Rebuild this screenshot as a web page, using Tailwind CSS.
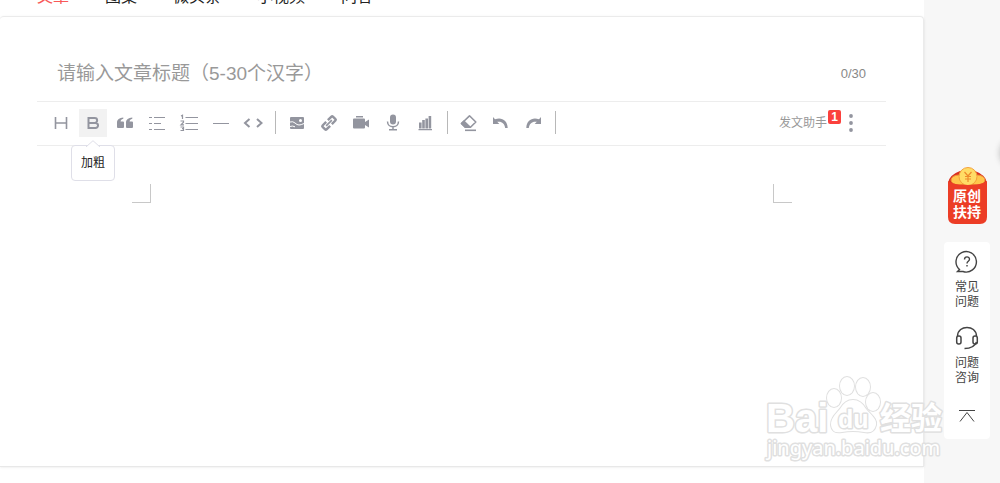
<!DOCTYPE html>
<html lang="zh-CN">
<head>
    <meta charset="UTF-8" />
    <meta name="viewport" content="width=device-width, initial-scale=1.0" />
    <title>发表文章</title>
    <script src="https://cdn.jsdelivr.net/npm/@tailwindcss/browser@4"></script>
</head>
<body class="relative flex min-h-screen overflow-hidden bg-[#f7f7f7] font-['Liberation_Sans','Noto_Sans_CJK_SC',sans-serif] text-[#222]">
    <div class="flex min-w-0 flex-1 flex-col bg-white">
        <!-- Content type tabs, scrolled under the top edge -->
        <nav class="flex h-4 items-end gap-9 overflow-hidden pb-[7px] pl-[37px] text-base leading-6">
            <a href="#" class="text-[#f85959]">文章</a>
            <a href="#">图集</a>
            <a href="#">微头条</a>
            <a href="#">小视频</a>
            <a href="#">问答</a>
        </nav>

        <!-- Editor -->
        <main class="flex-1 rounded-t border-t border-r border-[#ebebeb] pr-[37px] pl-[37px] shadow-sm">
            <div class="flex h-[84px] items-end justify-between px-5 pb-[11px]">
                <input type="text" aria-label="文章标题" placeholder="请输入文章标题（5-30个汉字）" class="h-8 min-w-0 flex-1 text-[19px] outline-none placeholder:text-[#999]" />
                <span class="text-[13px] leading-8 text-[#888]">0/30</span>
            </div>

            <!-- Toolbar -->
            <div class="flex h-[45px] items-center justify-between border-y border-[#ededed] px-[10px] pb-0.5 text-[#93959f]">
                <div class="flex items-center gap-1">
                    <button type="button" aria-label="标题" class="flex size-7 items-center justify-center">
                        <svg class="size-5" viewBox="0 0 20 20" fill="none" stroke="currentColor" stroke-width="1.6"><path d="M4.5 4v12M15.5 4v12M4.5 10h11" /></svg>
                    </button>
                    <div class="relative">
                        <button type="button" aria-label="加粗" class="flex size-7 items-center justify-center bg-[#f2f2f2]">
                            <svg class="size-5" viewBox="0 0 20 20" fill="none" stroke="currentColor" stroke-width="2"><path d="M5.5 5h6.2a2.4 2.4 0 0 1 0 4.9H5.5zM5.5 9.900h7a2.500 2.500 0 0 1 0 5.100h-7z" /></svg>
                        </button>
                        <div role="tooltip" class="absolute top-9 left-1/2 z-10 -translate-x-1/2 rounded border border-[#dfdfe8] bg-white px-[9px] py-2 text-xs leading-[18px] whitespace-nowrap text-[#222]">
                            <svg class="absolute -top-[6px] left-1/2 h-[7px] w-3.5 -translate-x-1/2" viewBox="0 0 14 7" fill="white" stroke="#dfdfe8"><path d="M0 7l7-6.300L14 7" /></svg>
                            加粗
                        </div>
                    </div>
                    <button type="button" aria-label="引用" class="flex size-7 items-center justify-center">
                        <svg class="size-5" viewBox="0 0 20 20" fill="currentColor"><path d="M8.300 4.500v1.300C6.500 6.300 5.700 7.200 5.600 8.500H8a1 1 0 0 1 1 1V14a1 1 0 0 1-1 1H3a1 1 0 0 1-1-1V9.500C2 6.500 4.500 4.700 8.300 4.500zM17.300 4.500v1.300c-1.800.5-2.600 1.400-2.700 2.700H17a1 1 0 0 1 1 1V14a1 1 0 0 1-1 1h-5a1 1 0 0 1-1-1V9.500c0-3 2.500-4.800 6.300-5z" /></svg>
                    </button>
                    <button type="button" aria-label="无序列表" class="flex size-7 items-center justify-center">
                        <svg class="size-5" viewBox="0 0 20 20" fill="none" stroke="currentColor"><path d="M2 4.500h3M7 4.500h11M2 10.500h3M7 10.500h7M2 16.500h3M7 16.500h11" /></svg>
                    </button>
                    <button type="button" aria-label="有序列表" class="flex size-7 items-center justify-center">
                        <svg class="size-5" viewBox="0 0 20 20" fill="none" stroke="currentColor" stroke-width="1.200"><path d="M6.500 4.500H19M6.500 10.500H19M6.500 16.500H19" stroke-width="1" /><path d="M2 3l1.500-.8V6M1.500 8h3v1.200L2 11.800h3M1.500 14h3v1.700H3h1.500v1.800h-3" /></svg>
                    </button>
                    <button type="button" aria-label="分割线" class="flex size-7 items-center justify-center">
                        <svg class="size-5" viewBox="0 0 20 20" stroke="currentColor"><path d="M2 10.500h16" /></svg>
                    </button>
                    <button type="button" aria-label="代码" class="flex size-7 items-center justify-center">
                        <svg class="size-5" viewBox="0 0 20 20" fill="none" stroke="currentColor" stroke-width="2"><path d="M6.500 6L2 10l4.500 4M14 6l4.500 4-4.500 4" /></svg>
                    </button>
                    <span class="mr-[3px] ml-1 h-[23px] w-px bg-[#b8b8b8]"></span>
                    <button type="button" aria-label="图片" class="flex size-7 items-center justify-center">
                        <svg class="size-5" viewBox="0 0 20 20"><rect x="3" y="4" width="14" height="12" rx="1" fill="currentColor" /><circle cx="13.500" cy="7.500" r="1.500" fill="white" /><path d="M3 9q3-1 5 1t4 2 5-1.500M3 13.500q2.500-1 5 .3" fill="none" stroke="white" stroke-width="1" /></svg>
                    </button>
                    <button type="button" aria-label="链接" class="flex size-7 items-center justify-center">
                        <svg class="size-5" viewBox="0 0 20 20" fill="none" stroke="currentColor" stroke-width="2.400"><g transform="rotate(-45 10 10)"><path d="M8.800 7.200H3.700a1 1 0 0 0-1 1v3.600a1 1 0 0 0 1 1h5.100M11.200 7.200h5.100a1 1 0 0 1 1 1v3.600a1 1 0 0 1-1 1h-5.100" /><path d="M6 10h8" stroke-width="1.600" /></g></svg>
                    </button>
                    <button type="button" aria-label="视频" class="flex size-7 items-center justify-center">
                        <svg class="size-5" viewBox="0 0 20 20" fill="currentColor"><path d="M5 3h7v1.500H5zM3 5.500h10a1 1 0 0 1 1 1V9l4-2.500v8L14 12v2.500a1 1 0 0 1-1 1H3a1 1 0 0 1-1-1v-8a1 1 0 0 1 1-1z" /></svg>
                    </button>
                    <button type="button" aria-label="音频" class="flex size-7 items-center justify-center">
                        <svg class="size-5" viewBox="0 0 20 20" fill="none" stroke="currentColor" stroke-width="1.500"><rect x="7" y="1.500" width="6" height="10" rx="3" fill="currentColor" stroke="none" /><path d="M4.500 8.500c0 7 11 7 11 0M10 14v3M6 16.800h8" /></svg>
                    </button>
                    <button type="button" aria-label="投票" class="flex size-7 items-center justify-center">
                        <svg class="size-5" viewBox="0 0 20 20" fill="currentColor"><path d="M4 9.500h2.600v6H4zM7.200 7h2.600v8.500H7.200zM10.400 5.500h2.600v10h-2.600zM13.600 3h2.600v12.500h-2.600zM3.500 16h13.500v1.200H3.500z" /></svg>
                    </button>
                    <span class="mr-[3px] ml-1 h-[23px] w-px bg-[#b8b8b8]"></span>
                    <button type="button" aria-label="清除格式" class="flex size-7 items-center justify-center">
                        <svg class="size-5" viewBox="0 0 20 20" fill="none" stroke="currentColor" stroke-width="1.600" stroke-linejoin="round"><path d="M10.500 2.800l6.300 6.200-5.300 5.200H6.300L2.500 10.500z" /><path d="M5 8.200l6 5.900H6.300L2.500 10.500z" fill="currentColor" /><path d="M6 17.300h11" /></svg>
                    </button>
                    <button type="button" aria-label="撤销" class="flex size-7 items-center justify-center">
                        <svg class="size-5" viewBox="0 0 20 20" fill="currentColor"><path d="M2 4l2 2.300c6.500-2.500 12.500 1 12.700 8.700h-2.500c-.5-4.700-3.700-7-8-6.200L8.300 11H2z" /></svg>
                    </button>
                    <button type="button" aria-label="重做" class="flex size-7 items-center justify-center">
                        <svg class="size-5" viewBox="0 0 20 20" fill="currentColor"><path d="M18 4l-2 2.300C9.500 3.800 3.500 7.300 3.300 15h2.500c.5-4.700 3.700-7 8-6.200L11.700 11H18z" /></svg>
                    </button>
                    <span class="ml-1 h-[23px] w-px bg-[#b8b8b8]"></span>
                </div>

                <div class="flex items-center gap-4 pr-[17px]">
                    <button type="button" class="relative text-xs leading-6 text-[#999]">
                        发文助手
                        <span class="absolute -top-px left-full ml-px flex h-[14px] w-[13px] items-center justify-center rounded-xs bg-[#fb413d] text-xs font-bold text-white">1</span>
                    </button>
                    <button type="button" aria-label="更多" class="flex w-4 justify-center">
                        <svg class="h-5 w-1" viewBox="0 0 4 20" fill="currentColor"><circle cx="2" cy="3" r="1.900" /><circle cx="2" cy="10" r="1.900" /><circle cx="2" cy="17" r="1.900" /></svg>
                    </button>
                </div>
            </div>

            <!-- Page margin corners -->
            <div class="mx-auto flex max-w-[660px] justify-between pt-[38px]">
                <span class="size-[19px] border-r border-b border-[#c8c8c8]"></span>
                <span class="size-[19px] border-b border-l border-[#c8c8c8]"></span>
            </div>
        </main>
        <footer class="h-[17px] border-t border-[#e8e8e8]"></footer>
    </div>

    <!-- Floating side tools -->
    <aside class="flex w-[76px] shrink-0 flex-col items-center pt-[167px] pr-[10px] pl-5">
        <a href="#" aria-label="原创扶持" class="relative block h-[57px] w-[39px]">
            <svg class="absolute inset-0 size-full" viewBox="0 0 39 57">
                <path d="M0 16Q1 8 12 4h15q11 4 12 12v9H0z" fill="#d9301f" />
                <ellipse cx="11" cy="13" rx="8" ry="5" fill="#ffc64c" stroke="#ef8d35" />
                <ellipse cx="29" cy="13" rx="8" ry="5" fill="#ffc64c" stroke="#ef8d35" />
                <circle cx="20" cy="9.500" r="9" fill="#ffdc66" stroke="#f4a139" />
                <path d="M16.500 5l3.500 4 3.500-4M17 9.500h6M17 12h6M20 9v6" fill="none" stroke="#ee8a2b" stroke-width="1.200" />
                <path d="M0 14q5 4 19.500 4T39 14v36q0 7-7 7H7q-7 0-7-7z" fill="#ec3d26" />
            </svg>
            <span class="relative block pt-[21px] text-center text-sm leading-4 font-bold text-white">原创<br>扶持</span>
        </a>

        <div class="mt-[18px] flex w-full flex-col items-center rounded bg-white pt-2 pb-4 text-xs leading-[15px] text-[#444]">
            <a href="#" class="flex flex-col items-center text-center">
                <svg class="mb-1.5 size-6" viewBox="0 0 24 24" fill="none" stroke="#444" stroke-width="1.400"><path d="M4.500 19.500A10.200 10.200 0 1 1 8 21.500H2.500z" /><path d="M9.500 9.500c0-3.500 5-3.500 5-.2 0 2-2.500 2-2.500 4.200M12 15v1.500" /></svg>
                常见<br>问题
            </a>
            <a href="#" class="mt-4 flex flex-col items-center text-center">
                <svg class="mb-1.5 size-6" viewBox="0 0 24 24" fill="none" stroke="#444" stroke-width="1.500"><path d="M2.500 10C3 -1.500 21 -1.500 21.500 10M21.500 16c-1.500 4-5 6.500-12 6.500" /><rect x="1.700" y="10" width="4.300" height="8" rx="2" /><rect x="18" y="10" width="4.300" height="8" rx="2" /></svg>
                问题<br>咨询
            </a>
            <button type="button" aria-label="回到顶部" class="mt-[23px]">
                <svg class="h-[14px] w-4" viewBox="0 0 16 14" fill="none" stroke="#444"><path d="M0 1.500h16M1 12.500l7-9 7 9" /></svg>
            </button>
        </div>
    </aside>

    <!-- Shadow of the collapsed round button -->
    <span class="absolute top-[138px] -right-[30px] size-[30px] rounded-full shadow-[0_0_6px_#bbb]"></span>

    <!-- Watermark -->
    <svg class="pointer-events-none absolute right-[50px] bottom-4 z-20 h-[96px] w-[190px]" viewBox="0 0 190 96" fill="#fff" stroke="#e0e0e0" stroke-width="3" stroke-linejoin="round" paint-order="stroke">
        <text x="6" y="61" font-family="Liberation Sans" font-weight="bold" font-size="40">Bai</text>
        <g stroke-width="2">
            <ellipse cx="74" cy="27" rx="7" ry="9" />
            <ellipse cx="87" cy="15" rx="7" ry="9" />
            <ellipse cx="103" cy="16" rx="7" ry="9" />
            <ellipse cx="113" cy="31" rx="7" ry="9" />
            <path d="M93 29q8 0 13 9c6 7 11 10 10 16q-2 9-12 7-11-2-22 0-10 2-11-7c0-7 4-10 9-16q5-9 13-9z" />
        </g>
        <text x="78" y="57" font-family="Liberation Sans" font-weight="bold" font-size="25">du</text>
        <text x="120" y="58" font-family="Noto Sans CJK SC" font-weight="bold" font-size="31">经验</text>
        <text x="7" y="84" font-family="Noto Sans" font-size="20">jingyan.baidu.com</text>
    </svg>
</body>
</html>
